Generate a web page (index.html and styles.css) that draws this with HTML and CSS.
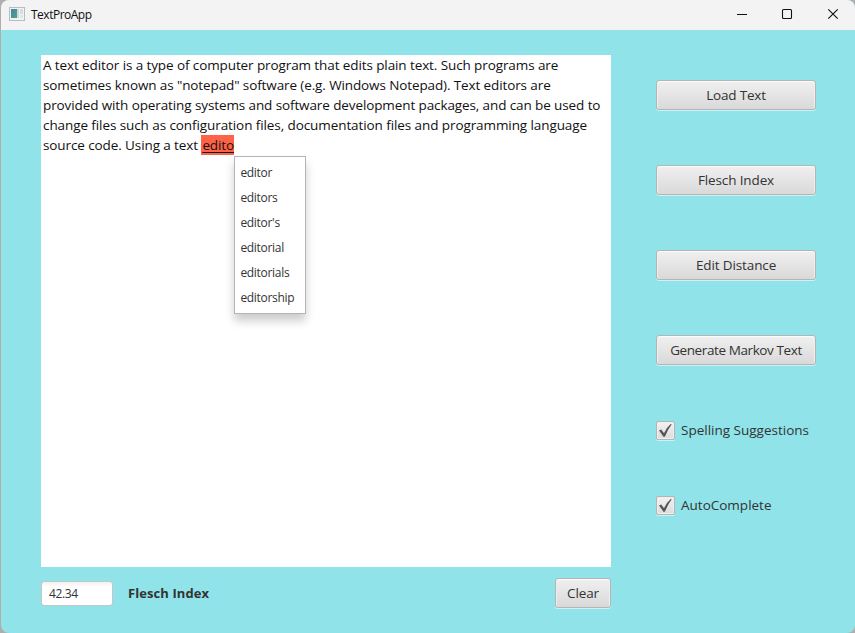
FILE: index.html
```html
<!DOCTYPE html>
<html lang="en">
<head>
<meta charset="utf-8">
<title>TextProApp</title>
<link rel="stylesheet" href="styles.css">
</head>
<body>
<div class="window">
  <header class="titlebar">
    <svg class="app-icon" width="16" height="14" viewBox="0 0 16 14">
      <defs>
        <linearGradient id="pane" x1="0" y1="0" x2="1" y2="1">
          <stop offset="0" stop-color="#4a80ad"/>
          <stop offset="1" stop-color="#4fa878"/>
        </linearGradient>
      </defs>
      <rect x=".5" y=".5" width="15" height="13" fill="#f1f2f4" stroke="#b9bdc3"/>
      <rect x="2" y="2" width="6" height="9" fill="url(#pane)"/>
      <rect x="8" y="2" width="2" height="9" fill="#c9dadd"/>
      <rect x="11" y="2" width="3" height="5" fill="#d9dde0"/>
      <rect x="11" y="8" width="3" height="3" fill="#e2e5e6"/>
    </svg>
    <span class="title">TextProApp</span>
    <svg class="controls" width="102" height="12" viewBox="0 0 102 12" fill="none" stroke="#111">
      <path d="M0 6.5H10" />
      <rect x="45.5" y="1.5" width="9" height="9" rx="1" stroke-width="1.1"/>
      <path d="M91.3 1.3L100.7 10.7M100.7 1.3L91.3 10.7" stroke-width="1.15"/>
    </svg>
  </header>
  <div class="content">
    <main class="editor-column">
      <div class="editor">
        <div class="line l1">A text editor is a type of computer program that edits plain text. Such programs are</div>
        <div class="line l2">sometimes known as "notepad" software (e.g. Windows Notepad). Text editors are</div>
        <div class="line l3">provided with operating systems and software development packages, and can be used to</div>
        <div class="line l4">change files such as configuration files, documentation files and programming language</div>
        <div class="line l5">source code. Using a text <span class="misspelled">edito<span class="menu"><span>editor</span><span>editors</span><span>editor's</span><span>editorial</span><span>editorials</span><span>editorship</span></span></span></div>
      </div>
      <div class="footer">
        <div class="field">42.34</div>
        <div class="field-label">Flesch Index</div>
        <button class="button clear">Clear</button>
      </div>
    </main>
    <aside class="actions">
      <button class="button load">Load Text</button>
      <button class="button flesch">Flesch Index</button>
      <button class="button distance">Edit Distance</button>
      <button class="button markov">Generate Markov Text</button>
      <div class="check spelling"><span class="box"><svg width="15" height="15" viewBox="0 0 15 15"><path d="M1 7.5L3.2 6.6L6 10.2Q8.5 4.5 13 .8L13.6 1.5Q10 6 7 13.6L5.7 14Z" fill="#555"/></svg></span><span class="caption">Spelling Suggestions</span></div>
      <div class="check auto"><span class="box"><svg width="15" height="15" viewBox="0 0 15 15"><path d="M1 7.5L3.2 6.6L6 10.2Q8.5 4.5 13 .8L13.6 1.5Q10 6 7 13.6L5.7 14Z" fill="#555"/></svg></span><span class="caption">AutoComplete</span></div>
    </aside>
  </div>
</div>
</body>
</html>
```
FILE: styles.css
```css
* { box-sizing: border-box; }
body {
  margin: 0;
  height: 633px;
  overflow: hidden;
  background: #b0adad;
  font-family: "Open Sans", "Noto Sans", sans-serif;
  font-size: 13.5px;
  color: #333;
}
.window {
  height: 633px;
  margin-left: 1px;
  border-radius: 8px;
  overflow: hidden;
  background: #8fe3e9;
}
.titlebar {
  display: flex;
  align-items: center;
  height: 30px;
  padding: 0 16px 2px 8px;
  background: #f3f3f3;
}
.app-icon { margin-right: 6px; }
.title { font-size: 12px; line-height: 16px; color: #111; letter-spacing: -.5px; padding-top: 1px; }
.controls { margin-left: auto; }
.content { display: flex; padding: 25px 39px 0 40px; gap: 45px; }
.editor-column { width: 570px; }
.editor {
  height: 512px;
  padding: 0 2px;
  background: #fff;
  color: #111;
}
.line { width: max-content; height: 20px; line-height: 20px; white-space: pre; }
.l1 { letter-spacing: -.1px; }
.l2 { letter-spacing: -.113px; }
.l3 { letter-spacing: -.106px; }
.l4 { letter-spacing: -.087px; }
.l5 { letter-spacing: -.1px; }
.misspelled {
  position: relative;
  display: inline-block;
  width: 33px;
  height: 20px;
  padding-left: 1px;
  background: #ff6347;
  text-decoration: underline;
  text-decoration-thickness: 1px;
  text-underline-offset: 2px;
}
.menu {
  position: absolute;
  left: 33px;
  top: 21px;
  display: flex;
  flex-direction: column;
  width: 72px;
  height: 158px;
  padding: 3px 5px;
  border: 1px solid #b5b5b5;
  background: #fff;
  box-shadow: 0 7px 9px rgba(0, 0, 0, .2);
  color: #333;
  font-size: 12px;
  line-height: 25px;
  letter-spacing: -.3px;
}
.menu span { display: block; height: 25px; }
.footer { display: flex; align-items: center; padding-top: 11px; }
.field {
  width: 72px;
  height: 25px;
  padding-left: 7px;
  border: 1px solid #c2c7c8;
  border-radius: 3px;
  background: linear-gradient(#f1f1f1, #fff 5px);
  font-size: 12px;
  line-height: 24px;
  letter-spacing: -.4px;
}
.field-label { margin-left: 15px; font-size: 13px; font-weight: 700; letter-spacing: .08px; }
.button {
  display: block;
  width: 160px;
  height: 30px;
  padding: 0;
  border: 1px solid #b5b5b5;
  border-radius: 3px;
  background: linear-gradient(#f0f0f0, #d9d9d9);
  box-shadow: inset 0 1px #fbfbfb, inset 1px 0 #eee, inset -1px 0 #eee, 0 1px rgba(255, 255, 255, .55);
  font: inherit;
  line-height: 28px;
  color: #333;
  letter-spacing: -.12px;
}
.load { letter-spacing: -.2px; }
.markov { letter-spacing: -.4px; }
.clear { width: 56px; margin-left: auto; }
.actions { width: 160px; padding-top: 25px; }
.actions .button { margin-bottom: 55px; }
.check { display: flex; align-items: center; height: 20px; margin-bottom: 55px; }
.box {
  display: grid;
  place-items: center;
  width: 19px;
  height: 19px;
  margin-right: 6px;
  border: 1px solid #b5b5b5;
  border-radius: 2px;
  background: linear-gradient(#f2f2f2, #dcdcdc);
  box-shadow: inset 0 0 0 1px #eee, 0 1px rgba(255, 255, 255, .55);
}
.caption { white-space: nowrap; line-height: 18px; padding-bottom: 1px; }
```
